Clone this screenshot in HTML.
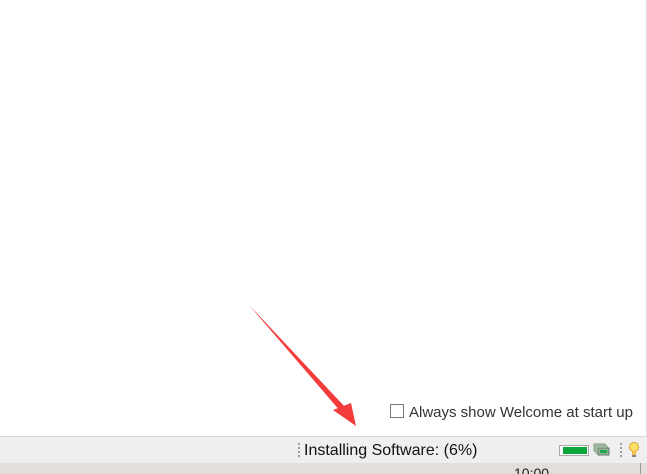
<!DOCTYPE html><html><head><style>
html,body{margin:0;width:647px;height:474px;overflow:hidden}
body{position:relative;background:#fff;font-family:"Liberation Sans",sans-serif}
.main{position:absolute;left:0;top:0;width:646px;height:436px;background:#fff;border-right:1px solid #ddd}
.sb{position:absolute;left:0;top:436px;width:647px;height:26px;background:#efefef;border-top:1px solid #d6d6d6}
.tb{position:absolute;left:0;top:463px;width:647px;height:11px;background:#e4dedb;overflow:hidden}
.txt{position:absolute;font-size:15px;color:#111}
.grip{position:absolute;width:2px;height:16px;background:repeating-linear-gradient(#a09a90 0 2px,transparent 2px 4px)}
</style></head><body>
<div class="main"></div>
<div style="position:absolute;left:390px;top:404px;width:14px;height:14px;border:1px solid #777;background:#fff;box-sizing:border-box"></div>
<div class="txt" style="left:409px;top:404px;color:#333">Always show Welcome at start up</div>
<div class="sb"></div>
<div class="grip" style="left:298px;top:443px"></div>
<div class="txt" style="left:304px;top:442px;font-size:16px">Installing Software: (6%)</div>
<div style="position:absolute;left:559px;top:445px;width:30px;height:11px;border:1px solid #aaa;box-sizing:border-box;background:#fff"><div style="margin:1px 1px 1px 3px;height:7px;background:#0aa63c"></div></div>
<svg style="position:absolute;left:593px;top:443px" width="18" height="14"><rect x="1" y="1" width="11" height="7" fill="#b9cfb9" stroke="#7a9a7a"/><rect x="3" y="3" width="11" height="7" fill="#c9dcc9" stroke="#7a9a7a"/><rect x="5" y="5" width="11" height="7" fill="#9ab09a" stroke="#5c7c6c"/><rect x="7" y="7" width="7" height="3" fill="#1aa84a"/></svg>
<div class="grip" style="left:620px;top:443px"></div>
<svg style="position:absolute;left:628px;top:441px" width="12" height="18"><circle cx="6" cy="6" r="4.5" fill="#ffe06a" stroke="#e0a020"/><rect x="4" y="10" width="4" height="5" fill="#f3c04a"/><rect x="4" y="14" width="4" height="2" fill="#888"/></svg>
<div class="tb"><div style="position:absolute;left:514px;top:3px;font-size:14px;color:#222;line-height:14px">10:00</div></div>
<div style="position:absolute;left:640px;top:463px;width:1px;height:11px;background:#999"></div>
<svg style="position:absolute;left:0;top:0" width="647" height="474"><polygon points="249,305 346,408 341,412" fill="#f53c3c"/><polygon points="333,410 351,403 356,426" fill="#f53c3c"/></svg>
</body></html>
